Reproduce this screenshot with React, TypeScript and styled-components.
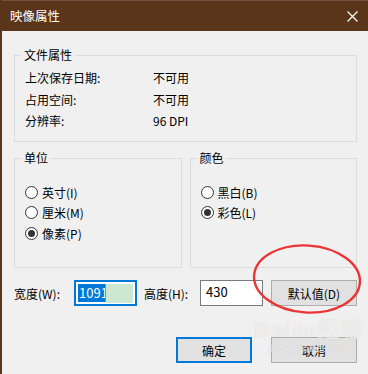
import styled, { createGlobalStyle } from 'styled-components';

const GlobalStyle = createGlobalStyle`
	html, body {
		margin: 0;
		padding: 0;
		background: #f0f0f0;
	}
	body {
		font-family: 'Noto Sans CJK SC', 'Noto Sans', 'Liberation Sans', sans-serif;
		font-size: 12px;
		color: #000;
	}
`;

const App = () => {
	return (
		<>
			<GlobalStyle />
			<Window>
				<TitleBar>
					<Title>映像属性</Title>
					<CloseIcon width="11" height="11" viewBox="0 0 11 11">
						<path d="M0.5 0.5 L10.5 10.5 M10.5 0.5 L0.5 10.5" stroke="#fff" strokeWidth="1.2" />
					</CloseIcon>
				</TitleBar>
				<Content>
					<Group $height={87}>
						<Legend>文件属性</Legend>
						<InfoList>
							<InfoRow>
								<InfoLabel>上次保存日期:</InfoLabel>
								<span>不可用</span>
							</InfoRow>
							<InfoRow>
								<InfoLabel>占用空间:</InfoLabel>
								<span>不可用</span>
							</InfoRow>
							<InfoRow>
								<InfoLabel>分辨率:</InfoLabel>
								<span>96 DPI</span>
							</InfoRow>
						</InfoList>
					</Group>
					<GroupRow>
						<Group $height={110} $grow>
							<Legend>单位</Legend>
							<RadioList>
								<Radio label="英寸(I)" />
								<Radio label="厘米(M)" />
								<Radio label="像素(P)" checked />
							</RadioList>
						</Group>
						<Group $height={110} $grow>
							<Legend>颜色</Legend>
							<RadioList>
								<Radio label="黑白(B)" />
								<Radio label="彩色(L)" checked />
							</RadioList>
						</Group>
					</GroupRow>
					<SizeRow>
						<FieldLabel $width={60}>宽度(W):</FieldLabel>
						<ActiveInput>
							<Selected>1091</Selected>
							<Caret />
							<Highlight />
						</ActiveInput>
						<FieldLabel $width={56} $indent={7}>高度(H):</FieldLabel>
						<PlainInput>430</PlainInput>
						<Button $width={86} $ml={8}>默认值(D)</Button>
					</SizeRow>
					<Footer>
						<Button $width={76} $primary>确定</Button>
						<Button $width={86}>取消</Button>
					</Footer>
				</Content>
				<Mark width="120" height="80" viewBox="0 0 120 80">
					<ellipse cx="56" cy="40" rx="53" ry="33.5" fill="none" stroke="#ec3434" strokeWidth="2.4" transform="rotate(4 56 40)" />
				</Mark>
				<Watermark>
					<WatermarkLogo>Bai<Du>du</Du>经验</WatermarkLogo>
					<WatermarkUrl>jingyan.baidu.com</WatermarkUrl>
				</Watermark>
			</Window>
		</>
	);
};

export default App;

const Radio = ({ label, checked }: { label: string; checked?: boolean }) => (
	<RadioRow>
		<RadioCircle>{checked && <RadioDot />}</RadioCircle>
		<span>{label}</span>
	</RadioRow>
);

const Window = styled.div`
	position: relative;
	width: 368px;
	height: 374px;
	overflow: hidden;
	box-sizing: border-box;
	border-left: 2px solid #5a3519;
	background: #f0f0f0;
`;

const TitleBar = styled.div`
	display: flex;
	align-items: center;
	justify-content: space-between;
	height: 31px;
	padding: 0 10px 0 8px;
	background: #5a3519;
	border-top: 1px solid #6e5242;
	box-sizing: border-box;
`;

const Title = styled.div`
	color: #fff;
	font-size: 12.5px;
	line-height: 16px;
`;

const CloseIcon = styled.svg`
	display: block;
`;

const Content = styled.div`
	display: flex;
	flex-direction: column;
	padding: 24px 11px 0 12px;
`;

const Group = styled.div<{ $height: number; $grow?: boolean }>`
	box-sizing: border-box;
	height: ${(p) => p.$height}px;
	border: 1px solid #dcdcdc;
	flex: ${(p) => (p.$grow ? 1 : 'none')};
	display: flex;
	flex-direction: column;
`;

const Legend = styled.div`
	margin: -9px 0 0 6px;
	padding: 0 3px;
	width: fit-content;
	line-height: 16px;
	background: #f0f0f0;
`;

const InfoList = styled.div`
	display: flex;
	flex-direction: column;
	padding: 4px 0 0 10px;
`;

const InfoRow = styled.div`
	display: flex;
	height: 21.5px;
	align-items: center;
`;

const InfoLabel = styled.span`
	width: 128px;
`;

const GroupRow = styled.div`
	display: flex;
	gap: 8px;
	margin-top: 16px;
`;

const RadioList = styled.div`
	display: flex;
	flex-direction: column;
	padding: 16px 0 0 10px;
`;

const RadioRow = styled.div`
	display: flex;
	align-items: center;
	gap: 4px;
	height: 20.5px;
`;

const RadioCircle = styled.span`
	box-sizing: border-box;
	width: 13px;
	height: 13px;
	border-radius: 50%;
	border: 1px solid #333;
	background: #fff;
	display: flex;
	align-items: center;
	justify-content: center;
`;

const RadioDot = styled.span`
	width: 7px;
	height: 7px;
	border-radius: 50%;
	background: #333;
`;

const SizeRow = styled.div`
	display: flex;
	align-items: center;
	margin-top: 12px;
	height: 26px;
`;

const FieldLabel = styled.span<{ $width: number; $indent?: number }>`
	width: ${(p) => p.$width}px;
	padding-left: ${(p) => p.$indent ?? 0}px;
`;

const ActiveInput = styled.div`
	box-sizing: border-box;
	width: 63px;
	height: 26px;
	border: 2px solid #0078d7;
	background: #fff;
	display: flex;
	align-items: center;
	padding: 0 2px 0 2px;
`;

const Selected = styled.span`
	background: #0078d7;
	color: #fff;
	font-size: 13px;
	line-height: 18px;
	height: 18px;
	padding: 0 1px 0 1px;
	width: 27px;
	box-sizing: border-box;
`;

const Caret = styled.span`
	width: 1px;
	height: 18px;
	background: #e2781d;
`;

const Highlight = styled.span`
	flex: 1;
	height: 19px;
	background: #cde8d0;
`;

const PlainInput = styled.div`
	box-sizing: border-box;
	width: 63px;
	height: 26px;
	border: 1px solid #7a7a7a;
	background: #fff;
	font-size: 13px;
	line-height: 22px;
	padding-left: 5px;
`;

const Button = styled.div<{ $width: number; $primary?: boolean; $ml?: number }>`
	box-sizing: border-box;
	width: ${(p) => p.$width}px;
	height: 26px;
	margin-left: ${(p) => p.$ml ?? 0}px;
	display: flex;
	align-items: center;
	justify-content: center;
	background: #e1e1e1;
	border: ${(p) => (p.$primary ? '2px solid #0078d7' : '1px solid #adadad')};
`;

const Footer = styled.div`
	display: flex;
	justify-content: flex-end;
	gap: 19px;
	margin-top: 31px;
`;

const Mark = styled.svg`
	position: absolute;
	left: 249px;
	top: 239px;
	overflow: visible;
`;

const Watermark = styled.div`
	position: absolute;
	left: 252px;
	top: 318px;
	display: flex;
	flex-direction: column;
	align-items: center;
	pointer-events: none;
	color: rgba(255, 255, 255, 0.6);
	text-shadow: 0 0 1px rgba(150, 150, 150, 0.35);
	font-family: 'Liberation Sans', 'Noto Sans CJK SC', sans-serif;
`;

const WatermarkLogo = styled.div`
	font-size: 22px;
	font-weight: bold;
	line-height: 24px;
	letter-spacing: 1px;
`;

const Du = styled.span`
	font-size: 18px;
	padding: 0 1px;
`;

const WatermarkUrl = styled.div`
	font-size: 10px;
	line-height: 12px;
`;
